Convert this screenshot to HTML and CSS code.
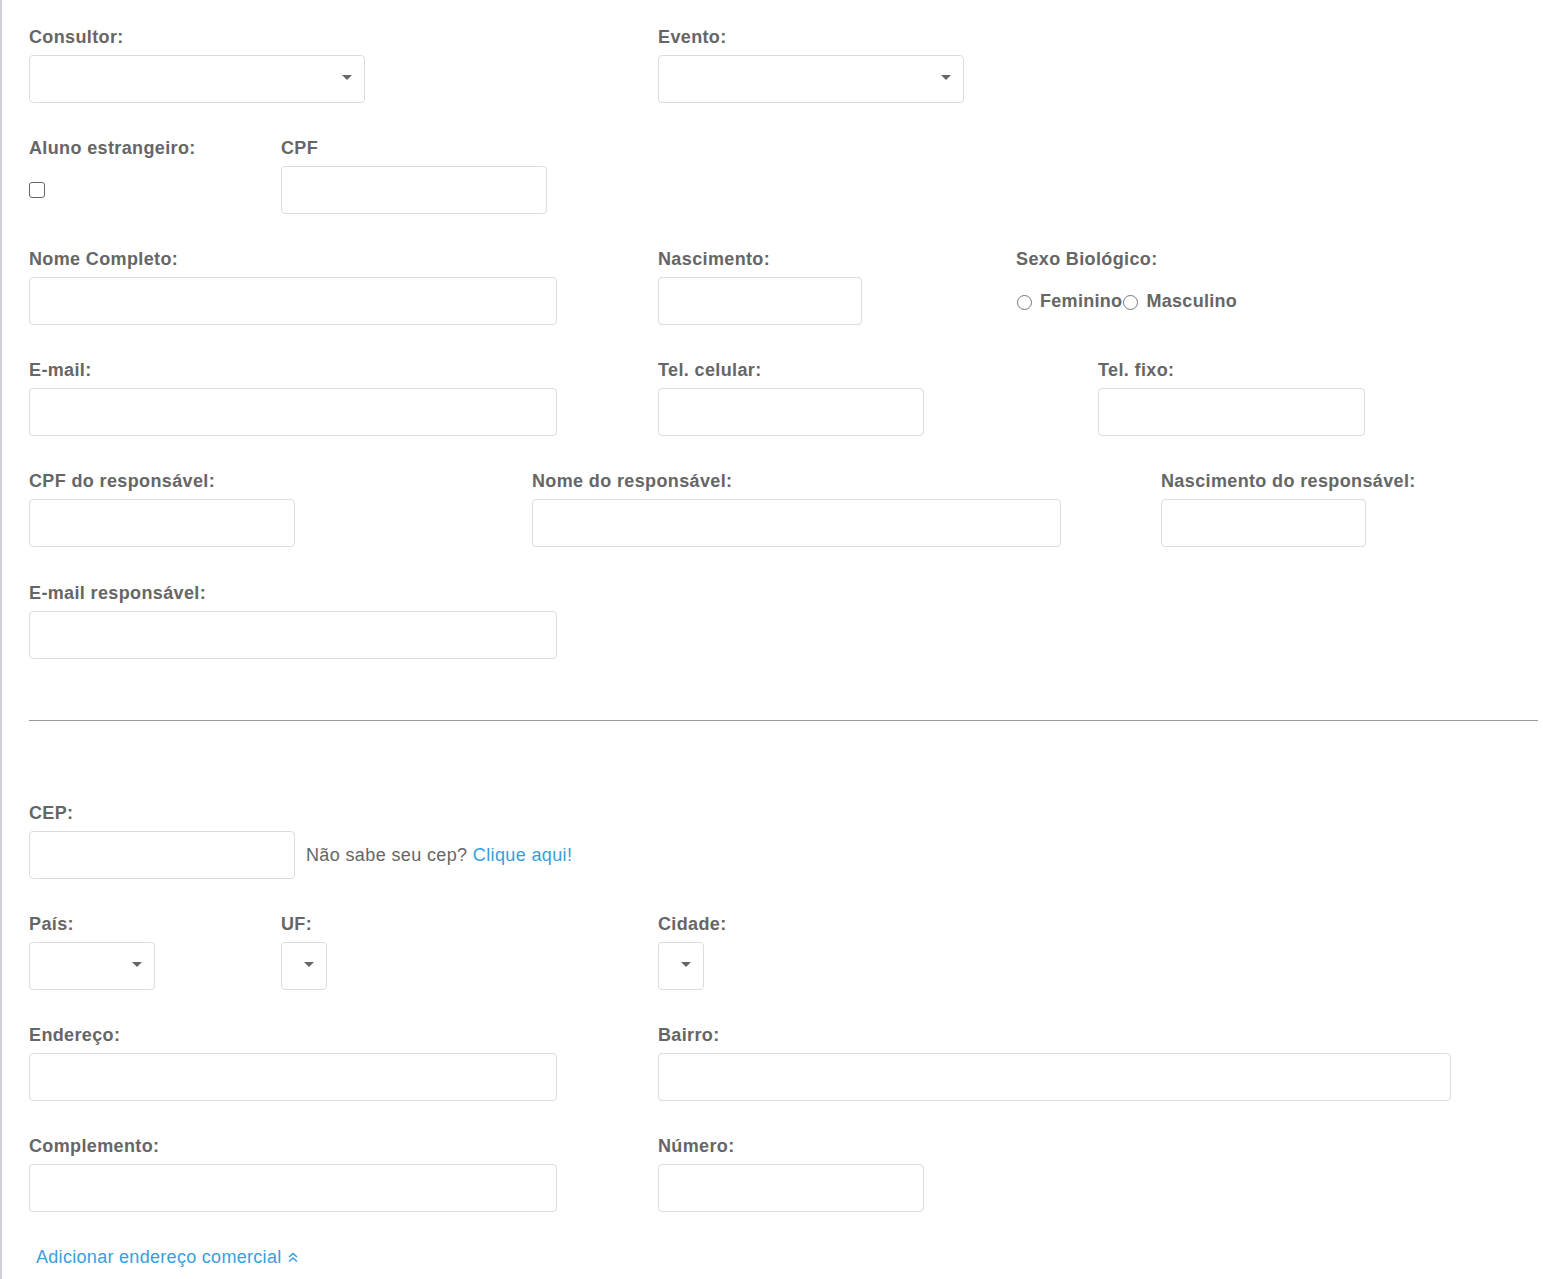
FILE: index.html
```html
<!DOCTYPE html>
<html lang="pt-BR">
<head>
<meta charset="utf-8">
<title>Cadastro</title>
<link rel="stylesheet" href="styles.css">
</head>
<body>
<div class="page">
  <form class="form">
    <div class="row r1">
      <div class="field"><label class="lbl">Consultor:</label><div class="select w336"></div></div>
      <div class="field"><label class="lbl">Evento:</label><div class="select w306"></div></div>
    </div>
    <div class="row r2">
      <div class="field"><label class="lbl">Aluno estrangeiro:</label><div class="ctrl"><input type="checkbox" class="check"></div></div>
      <div class="field"><label class="lbl">CPF</label><input class="input w266" type="text"></div>
    </div>
    <div class="row r3">
      <div class="field"><label class="lbl">Nome Completo:</label><input class="input w528" type="text"></div>
      <div class="field"><label class="lbl">Nascimento:</label><input class="input w204" type="text"></div>
      <div class="field"><label class="lbl">Sexo Biológico:</label>
        <div class="ctrl radios">
          <label class="radio"><input type="radio" name="sexo">Feminino</label>
          <label class="radio"><input type="radio" name="sexo">Masculino</label>
        </div>
      </div>
    </div>
    <div class="row r4">
      <div class="field"><label class="lbl">E-mail:</label><input class="input w528" type="text"></div>
      <div class="field"><label class="lbl">Tel. celular:</label><input class="input w266" type="text"></div>
      <div class="field"><label class="lbl">Tel. fixo:</label><input class="input w267" type="text"></div>
    </div>
    <div class="row r5">
      <div class="field"><label class="lbl">CPF do responsável:</label><input class="input w266" type="text"></div>
      <div class="field"><label class="lbl">Nome do responsável:</label><input class="input w529" type="text"></div>
      <div class="field"><label class="lbl">Nascimento do responsável:</label><input class="input w205" type="text"></div>
    </div>
    <div class="row r6">
      <div class="field"><label class="lbl">E-mail responsável:</label><input class="input w528" type="text"></div>
    </div>

    <hr class="sep">

    <div class="row rcep">
      <div class="field"><label class="lbl">CEP:</label>
        <div class="cep-line"><input class="input w266" type="text"><span class="hint">Não sabe seu cep? <a class="link" href="#">Clique aqui!</a></span></div>
      </div>
    </div>
    <div class="row rloc">
      <div class="field"><label class="lbl">País:</label><div class="select w126"></div></div>
      <div class="field"><label class="lbl">UF:</label><div class="select w46"></div></div>
      <div class="field"><label class="lbl">Cidade:</label><div class="select w46"></div></div>
    </div>
    <div class="row raddr">
      <div class="field"><label class="lbl">Endereço:</label><input class="input w528" type="text"></div>
      <div class="field"><label class="lbl">Bairro:</label><input class="input w793" type="text"></div>
    </div>
    <div class="row raddr last">
      <div class="field"><label class="lbl">Complemento:</label><input class="input w528" type="text"></div>
      <div class="field"><label class="lbl">Número:</label><input class="input w266" type="text"></div>
    </div>
    <a class="link add" href="#">Adicionar endereço comercial <svg class="chev" width="12" height="12" viewBox="0 0 12 12"><polyline points="2,6 6,2.5 10,6" fill="none" stroke="#36a0dc" stroke-width="1.6"/><polyline points="2,10.5 6,7 10,10.5" fill="none" stroke="#36a0dc" stroke-width="1.6"/></svg></a>
  </form>
</div>
</body>
</html>
```

FILE: styles.css
```css
html, body {
  margin: 0;
  padding: 0;
  background: #fff;
}
body {
  font-family: "Liberation Sans", Arial, sans-serif;
  color: #666;
  letter-spacing: 0.37px;
}
.page {
  border-left: 2px solid #cfcfd6;
  min-height: 1279px;
  box-sizing: border-box;
  padding: 27px 5px 0 27px;
}
.form {
  display: block;
}
.row {
  display: grid;
  margin-bottom: 35px;
}
.r1 { grid-template-columns: 629px 1fr; }
.r2 { grid-template-columns: 252px 1fr; }
.r3 { grid-template-columns: 629px 358px 1fr; }
.r4 { grid-template-columns: 629px 440px 1fr; }
.r5 { grid-template-columns: 503px 629px 1fr; margin-bottom: 36px; }
.r6 { grid-template-columns: 1fr; }
.rcep { grid-template-columns: 1fr; }
.rloc { grid-template-columns: 252px 377px 1fr; }
.raddr { grid-template-columns: 629px 1fr; }
.raddr.last { margin-bottom: 35px; }

.field {
  display: flex;
  flex-direction: column;
  align-items: flex-start;
}
.lbl {
  display: block;
  font-size: 18px;
  line-height: 20px;
  font-weight: bold;
  color: #666;
  margin-bottom: 8px;
  white-space: nowrap;
}
.input, .select {
  display: block;
  height: 48px;
  box-sizing: border-box;
  border: 1px solid #dcdcdc;
  border-radius: 4px;
  background: #fff;
  margin: 0;
  padding: 0 12px;
  font: inherit;
}
.select {
  position: relative;
}
.select::after {
  content: "";
  position: absolute;
  right: 12px;
  top: 19px;
  border-left: 5.5px solid transparent;
  border-right: 5.5px solid transparent;
  border-top: 5px solid #666;
}
.w46 { width: 46px; }
.w126 { width: 126px; }
.w204 { width: 204px; }
.w205 { width: 205px; }
.w266 { width: 266px; }
.w267 { width: 267px; }
.w306 { width: 306px; }
.w336 { width: 336px; }
.w528 { width: 528px; }
.w529 { width: 529px; }
.w793 { width: 793px; }

.ctrl {
  height: 48px;
  display: flex;
  align-items: center;
}
.check {
  appearance: none;
  -webkit-appearance: none;
  width: 16px;
  height: 16px;
  box-sizing: border-box;
  border: 1px solid #666;
  border-radius: 3px;
  margin: 0;
  background: #fff;
}
.radios {
  gap: 0;
}
.radio {
  display: flex;
  align-items: center;
  font-size: 18px;
  font-weight: bold;
  color: #666;
  letter-spacing: 0.3px;
}
.radio input {
  appearance: none;
  -webkit-appearance: none;
  width: 15px;
  height: 15px;
  box-sizing: border-box;
  border: 1px solid #777;
  border-radius: 50%;
  margin: 2px 8px 0 1px;
  background: #fff;
}
.sep {
  border: 0;
  border-top: 1px solid #999;
  margin: 61px 0 82px 0;
  height: 0;
}
.cep-line {
  display: flex;
  align-items: center;
}
.hint {
  margin-left: 11px;
  font-size: 18px;
  color: #666;
  white-space: nowrap;
}
.link {
  color: #36a0dc;
  text-decoration: none;
}
.add {
  display: inline-flex;
  align-items: center;
  gap: 5px;
  margin-left: 7px;
  font-size: 18px;
  line-height: 20px;
  letter-spacing: 0.3px;
}
.chev {
  display: block;
}
```
